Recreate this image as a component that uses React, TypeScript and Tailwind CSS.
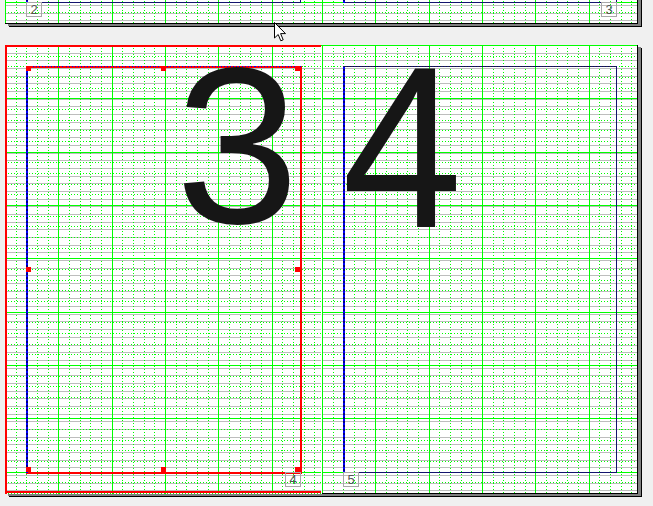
import React from "react";

// page geometry (A4 at ~53% zoom)
const H = 449;
const MAJOR = 53.333;
const MINOR = 10.667;
const BASE = 7.68;
const M = 21.333;

const steps = (step: number, max: number) => {
  const out: number[] = [];
  for (let i = 0; i * step < max; i++) out.push(i * step);
  return out;
};
const px = (v: number) => Math.round(v) + 0.5;

function Grid({ w }: { w: number }) {
  const minorX = steps(MINOR, w).filter((_, i) => i % 5 !== 0);
  const minorY = steps(MINOR, H).filter((_, i) => i % 5 !== 0);
  return (
    <>
      <g stroke="#bdbdbd">
        {steps(BASE, H).slice(1).map((y) => (
          <line key={y} x1={0} x2={w} y1={px(y)} y2={px(y)} />
        ))}
      </g>
      <g stroke="#00ff00" strokeDasharray="1 2">
        {minorX.map((x) => (
          <line key={"v" + x} x1={px(x)} x2={px(x)} y1={0} y2={H} />
        ))}
        {minorY.map((y) => (
          <line key={"h" + y} x1={0} x2={w} y1={px(y)} y2={px(y)} />
        ))}
      </g>
      <g stroke="#00ff00">
        {steps(MAJOR, w).map((x) => (
          <line key={"V" + x} x1={px(x)} x2={px(x)} y1={0} y2={H} />
        ))}
        {steps(MAJOR, H).map((y) => (
          <line key={"H" + y} x1={0} x2={w} y1={px(y)} y2={px(y)} />
        ))}
      </g>
    </>
  );
}

function Frame({ w, selected }: { w: number; selected?: boolean }) {
  const x1 = px(M);
  const x2 = px(w - M) - 1;
  const y1 = px(M);
  const y2 = px(H - M) - 1;
  const xm = (x1 + x2) / 2;
  const ym = (y1 + y2) / 2;
  if (selected) {
    const hs: [number, number][] = [
      [x1, y1], [xm - 2.5, y1], [x2 - 5, y1],
      [x1, ym - 2.5], [x2 - 5, ym - 2.5],
      [x1, y2 - 5], [xm - 2.5, y2 - 5], [x2 - 5, y2 - 5],
    ];
    return (
      <g>
        <rect x={x1} y={y1} width={x2 - x1} height={y2 - y1} fill="none" stroke="#ff0000" strokeWidth={2} />
        <line x1={x1} x2={x1} y1={y1} y2={y2} stroke="#000080" strokeWidth={2} />
        <line x1={x1} x2={x1} y1={y1} y2={y2} stroke="#0000ff" strokeWidth={2} strokeDasharray="2 2" />
        <line x1={x1} x2={x2} y1={y1} y2={y1} stroke="#0000ff" strokeDasharray="1 2" />
        {hs.map(([x, y], i) => (
          <rect key={i} x={Math.round(x - 0.5)} y={Math.round(y - 0.5)} width={5} height={5} fill="#ff0000" />
        ))}
      </g>
    );
  }
  return (
    <g>
      <rect x={x1} y={y1} width={x2 - x1} height={y2 - y1} fill="none" stroke="#14146e" />
      <line x1={x1} x2={x1} y1={y1} y2={y2} stroke="#000080" strokeWidth={2} />
      <line x1={x1} x2={x1} y1={y1} y2={y2} stroke="#0000ff" strokeWidth={2} strokeDasharray="2 2" />
      <line x1={x1} x2={x2} y1={y1} y2={y1} stroke="#202020" strokeDasharray="1 2" />
    </g>
  );
}

type PageProps = {
  w: number;
  widthClass: string;
  current?: boolean;
  side: "left" | "right";
  num: string;
  numAt: "start" | "end";
  big?: string;
};

function Page({ w, widthClass, current, side, num, numAt, big }: PageProps) {
  return (
    <div className={`relative h-[449px] bg-white ${widthClass}`}>
      <svg width={w} height={H} className="absolute left-0 top-0" shapeRendering="crispEdges">
        <Grid w={w} />
        <Frame w={w} selected={current} />
        {current ? (
          <>
            <g stroke="#ff0000" strokeWidth={2}>
              <line x1={1} x2={1} y1={0} y2={H} />
              <line x1={0} x2={w - 1} y1={1} y2={1} />
              <line x1={0} x2={w - 1} y1={H - 2} y2={H - 2} />
            </g>
            <line x1={w - 0.5} x2={w - 0.5} y1={2} y2={H - 3} stroke="#fff" />
          </>
        ) : (
          <g stroke="#000">
            <line x1={0} x2={w} y1={H - 0.5} y2={H - 0.5} />
            {side === "right" && <line x1={w - 0.5} x2={w - 0.5} y1={0} y2={H} />}
          </g>
        )}
      </svg>

      {big &&
        (side === "left" ? (
          <div className="absolute right-[23px] top-[-10px] text-[222px] leading-none text-[#161616]">{big}</div>
        ) : (
          <div className="absolute left-[20px] top-[-12px] origin-left scale-x-[0.94] text-[230px] leading-none text-[#161616]">
            {big}
          </div>
        ))}

      <div
        className={`absolute top-[427px] flex h-[15px] w-[16px] items-center justify-center border border-[#a8a8a8] text-[13px] leading-none text-[#555] ${
          numAt === "start" ? "left-[21px]" : "right-[21px]"
        }`}
      >
        {num}
      </div>
    </div>
  );
}

function Cursor() {
  return (
    <svg width="13" height="21" viewBox="0 0 13 21" className="absolute left-[274px] top-[22px]">
      <path d="M0.5 0.5 L0.5 16 L4.2 12.5 L6.8 18.8 L9.2 17.8 L6.6 11.6 L11.5 11.6 Z" fill="#fff" stroke="#000" strokeLinejoin="round" />
    </svg>
  );
}

export default function App() {
  return (
    <div className="relative h-[506px] w-[653px] overflow-hidden bg-[#f0f0f0] font-['Liberation_Sans',Arial,sans-serif]">
      <div className="flex flex-col items-start pl-[5px]">
        {/* previous spread, mostly scrolled out */}
        <div className="-mt-[425px] flex shadow-[3px_2px_0_0_#808080,4px_3px_0_0_#000]">
          <Page w={317} widthClass="w-[317px]" side="left" num="2" numAt="start" />
          <Page w={316} widthClass="w-[316px]" side="right" num="3" numAt="end" />
        </div>

        {/* current spread */}
        <div className="mt-[21px] flex shadow-[3px_2px_0_0_#808080,4px_3px_0_0_#000]">
          <Page w={317} widthClass="w-[317px]" current side="left" num="4" numAt="end" big="3" />
          <Page w={316} widthClass="w-[316px]" side="right" num="5" numAt="start" big="4" />
        </div>
      </div>
      <Cursor />
    </div>
  );
}
